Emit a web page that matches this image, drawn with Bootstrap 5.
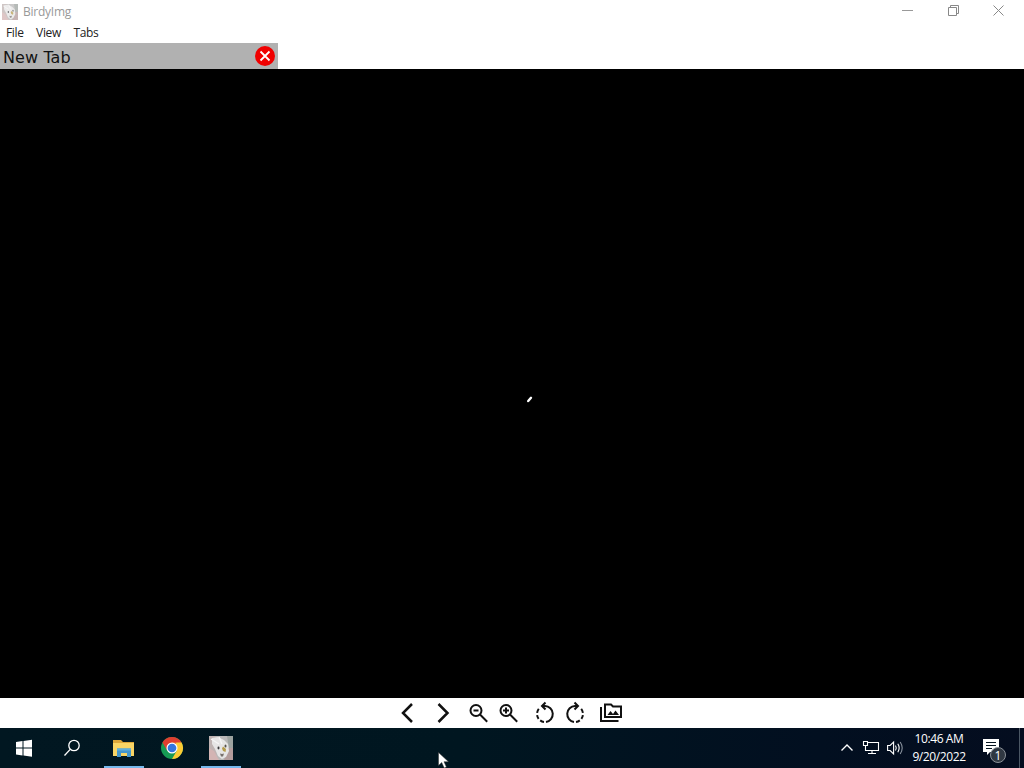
<!DOCTYPE html>
<html lang="en">
<head>
    <meta charset="UTF-8">
    <meta name="viewport" content="width=device-width, initial-scale=1.0">
    <title>BirdyImg</title>
    <link href="https://cdn.jsdelivr.net/npm/bootstrap@5.3.0/dist/css/bootstrap.min.css" rel="stylesheet">
    <style>
        body {
            height: 768px;
            font-family: "Open Sans", "Noto Sans", sans-serif;
            font-size: 12px;
            line-height: 18px;
            color: #222;
        }
        svg {
            display: block;
            flex: none;
            overflow: visible;
        }
        .title-bar {
            height: 23px;
            padding-left: 2px;
            color: #999;
        }
        .title-text {
            margin-left: 5px;
            padding-top: 1px;
            letter-spacing: -0.25px;
        }
        .window-btns {
            margin-right: 2.5px;
        }
        .window-btn {
            width: 45.5px;
            height: 21px;
        }
        .menu-bar {
            height: 20px;
            padding-left: 6px;
            gap: 12.5px;
            letter-spacing: -0.35px;
        }
        .tab-strip {
            height: 26px;
        }
        .image-tab {
            width: 278px;
            padding: 0 3px;
            background: #b1b1b1;
            font-family: "DejaVu Sans", sans-serif;
            font-size: 16px;
            letter-spacing: 0.1px;
            color: #111;
        }
        .viewer {
            height: 629px;
            background: #000;
            padding: 31px 0 0 36px;
        }
        .tool-bar {
            height: 30px;
            padding-left: 395px;
        }
        .task-bar {
            height: 40px;
            background: linear-gradient(90deg, #011721, #001620 45%, #020f20 80%, #040d1f);
            color: #fff;
        }
        .task-btn {
            width: 48px;
            height: 40px;
        }
        .task-open {
            width: 40px;
            margin: 0 5px;
            box-shadow: inset 0 -2px #76b9ed;
        }
        .tray {
            gap: 8px;
        }
        .clock {
            width: 62px;
            margin-left: -3px;
            letter-spacing: -0.4px;
            white-space: nowrap;
        }
        .notice-icon {
            margin-left: 5px;
            margin-right: 2px;
        }
        .show-desktop {
            width: 5px;
            height: 40px;
            border-left: 1px solid #4b5764;
        }
        .pointer {
            left: 438px;
            top: 752px;
        }
    </style>
</head>
<body class="d-flex flex-column overflow-hidden bg-white">
    <!-- Bird picture shared by the title bar and the task bar -->
    <svg class="d-none">
        <symbol id="bird" viewBox="0 0 24 24">
            <rect width="24" height="24" fill="#b9b8b8"/>
            <path d="M0 0h7L5 8l3 7-2 9H0z" fill="#bfb3b2"/>
            <path d="M0 12l5 3 5 9H0z" fill="#d3b4b3"/>
            <path d="M18 0h6v12h-4z" fill="#9da3a0"/>
            <path d="M19 12h5v12h-9z" fill="#b39c9c"/>
            <path d="M3 2l6-1 6 3 4 4 1 7-3 6-4 2-4-3-3-7-3-5z" fill="#e6e5e5"/>
            <path d="M2 3l8 5M10 1l3 7" stroke="#f5f5f5" stroke-width="1.300"/>
            <ellipse cx="9.500" cy="12" rx="1" ry="1.400" fill="#3a3a3c"/>
            <ellipse cx="16.500" cy="10" rx="1" ry="1.500" fill="#55524c"/>
            <path d="M14 10.500l3 2.500-.5 3-2.500-1-1-2.500z" fill="#b59b4a"/>
            <path d="M11 17.500l2 .5 2-.5-1 3h-2z" fill="#77716e"/>
        </symbol>
    </svg>

    <!-- Title Bar -->
    <div class="title-bar d-flex align-items-center">
        <svg width="16" height="16" opacity=".75"><use href="#bird"/></svg>
        <span class="title-text">BirdyImg</span>
        <div class="window-btns d-flex ms-auto align-self-start">
            <div class="window-btn d-flex align-items-center justify-content-center">
                <svg width="11" height="11" stroke="#999"><path d="M0 5.500h11"/></svg>
            </div>
            <div class="window-btn d-flex align-items-center justify-content-center">
                <svg width="11" height="11" fill="none" stroke="#888"><path d="M.5 2.500h8v8h-8zM2.500 2.500v-2h8v8h-2"/></svg>
            </div>
            <div class="window-btn d-flex align-items-center justify-content-center">
                <svg width="11" height="11" stroke="#888"><path d="M.5.500l10 10M10.500.500l-10 10"/></svg>
            </div>
        </div>
    </div>

    <!-- Menu -->
    <div class="menu-bar d-flex align-items-center">
        <span>File</span>
        <span>View</span>
        <span>Tabs</span>
    </div>

    <!-- Open Tabs -->
    <div class="tab-strip d-flex">
        <div class="image-tab d-flex align-items-center justify-content-between">
            <span class="pt-1">New Tab</span>
            <svg width="20" height="24" viewBox="0 0 20 24">
                <circle cx="10" cy="12" r="10" fill="#f00000"/>
                <path d="M5.500 7.500l9 9M14.500 7.500l-9 9" stroke="#fff" stroke-width="1.800"/>
            </svg>
        </div>
    </div>

    <!-- Viewer -->
    <div class="viewer d-flex align-items-center justify-content-center">
        <svg width="8" height="8"><path d="M2.200 6L5 2.800" stroke="#fff" stroke-width="2.400" stroke-linecap="round"/></svg>
    </div>

    <!-- Image Controls -->
    <div class="tool-bar d-flex align-items-center">
        <svg width="24" height="24" fill="none" stroke="#111" stroke-width="2.500"><path d="M17 3L8 12l9 9"/></svg>
        <svg class="ms-2" width="28" height="24" fill="none" stroke="#111" stroke-width="2.500"><path d="M11.500 3l9 9-9 9"/></svg>
        <svg width="30" height="24" viewBox="0 0 30 24" fill="none" stroke="#111" stroke-width="2">
            <g transform="translate(11.500 0)"><circle cx="9.500" cy="9.500" r="5.500"/><path d="M13.500 13.500l7.200 7.200M7 9.500h5"/></g>
        </svg>
        <svg width="30" height="24" viewBox="0 0 30 24" fill="none" stroke="#111" stroke-width="2">
            <g transform="translate(11.500 0)"><circle cx="9.500" cy="9.500" r="5.500"/><path d="M13.500 13.500l7.200 7.200M6.500 9.500h6M9.500 6.500v6"/></g>
        </svg>
        <svg width="36" height="24" viewBox="0 0 36 24" fill="none" stroke="#111" stroke-width="2">
            <g transform="translate(18 0)">
                <path d="M9 5h3a8 8 0 0 1 1 15.900"/>
                <path d="M12.500 1.500L9 5l3.500 3.500"/>
                <path d="M5.800 7.900A8 8 0 0 0 4.100 11.800M4.100 14.200A8 8 0 0 0 5.600 17.900M7.200 19.400A8 8 0 0 0 11 20.900"/>
            </g>
        </svg>
        <svg class="ms-1" width="30" height="24" viewBox="0 0 30 24" fill="none" stroke="#111" stroke-width="2">
            <g transform="translate(8 0)">
                <path d="M15 5h-3a8 8 0 0 0-1 15.900"/>
                <path d="M11.500 1.500L15 5l-3.500 3.500"/>
                <path d="M18.200 7.900A8 8 0 0 1 19.900 11.800M19.900 14.200A8 8 0 0 1 18.400 17.900M16.800 19.400A8 8 0 0 1 13 20.900"/>
            </g>
        </svg>
        <svg class="ms-3" width="30" height="24" viewBox="1 0 30 24" fill="none" stroke="#111" stroke-width="2">
            <path d="M5 3.500h6l2 2h8v10.500H5zM1 6v14h17.500"/>
            <path d="M7.500 14l3-4 2.500 3 2.500-3.500 3.500 4.500z" fill="#111" stroke="none"/>
        </svg>
    </div>

    <!-- Task Bar -->
    <div class="task-bar d-flex align-items-center">
        <div class="task-btn d-flex align-items-center justify-content-center">
            <svg width="16" height="18" viewBox="0 0 16 18" fill="#fff"><path d="M0 3l6.500-1v6.500H0zM7.500 1.900L16 .7v7.800H7.500zM0 9.500h6.500v7L0 15.500zM7.500 9.500H16v8.300l-8.500-1.200z"/></svg>
        </div>
        <div class="task-btn d-flex align-items-center justify-content-center">
            <svg width="18" height="18" fill="none" stroke="#fff" stroke-width="1.300"><circle cx="11" cy="6.500" r="5.200"/><path d="M7.200 10.400L1.500 16.500"/></svg>
        </div>
        <div class="task-btn task-open ms-2 me-1 d-flex align-items-center justify-content-center">
            <svg width="22" height="20" viewBox="0 0 22 20">
                <path d="M0 2h8l2 2h11v14H0z" fill="#dda73a"/>
                <path d="M0 5h21v13H0z" fill="#f9d565"/>
                <path d="M4 10.500h14V19h-4v-4H8v4H4z" fill="#4496cc"/>
                <path d="M4 10.500h14v2H4z" fill="#61b0dc"/>
            </svg>
        </div>
        <div class="task-btn d-flex align-items-center justify-content-center">
            <svg width="22" height="22" viewBox="0 0 48 48">
                <circle cx="24" cy="24" r="24" fill="#169b54"/>
                <path d="M24 24L3.200 12A24 24 0 0 1 44.800 12z" fill="#df3f30"/>
                <path d="M24 12h20.800A24 24 0 0 1 24 48l10.400-18z" fill="#fccb34"/>
                <path d="M3.200 12l10.400 18L24 24l10-12z" fill="#df3f30"/>
                <circle cx="24" cy="24" r="12" fill="#fff"/>
                <circle cx="24" cy="24" r="9.500" fill="#3476df"/>
            </svg>
        </div>
        <div class="task-btn task-open d-flex align-items-center justify-content-center">
            <svg width="24" height="24"><use href="#bird"/></svg>
        </div>

        <!-- Tray -->
        <div class="tray d-flex align-items-center ms-auto">
            <svg width="14" height="14" fill="none" stroke="#fff" stroke-width="1.400"><path d="M1.500 9.500L7 4l5.500 5.500"/></svg>
            <svg width="18" height="16" fill="none" stroke="#fff" stroke-width="1.100">
                <path d="M5 2.500h11.500v8H3.500V6M1.500 1.500h4v4h-4zM10 10.500v3M6 13.500h8"/>
            </svg>
            <svg width="15" height="16" viewBox="1 0 15 16" fill="none" stroke="#fff" stroke-width="1.100">
                <path d="M.6 5.500h2.500l3.500-3.500v12L3.100 10.500H.6z"/>
                <path d="M8.500 5.500q1.500 2.500 0 5M10.800 3.800q2.700 4.200 0 8.400"/>
                <path d="M13.200 2q4 6 0 12" stroke="#8a939e"/>
            </svg>
            <div class="clock text-center">
                <div>10:46 AM</div>
                <div>9/20/2022</div>
            </div>
            <svg class="notice-icon" width="26" height="28" viewBox="0 0 26 28">
                <path d="M0 5h16v13H7l-3 3v-3H0z" fill="#fff"/>
                <path d="M3 8.500h10M3 11.500h10M3 14.500h6" stroke="#061521"/>
                <circle cx="15" cy="21" r="7.500" fill="#303842" stroke="#8b9198"/>
                <text x="15" y="25.500" text-anchor="middle" font-size="12" fill="#fff">1</text>
            </svg>
            <div class="show-desktop"></div>
        </div>
    </div>

    <!-- Mouse pointer over the task bar -->
    <svg class="pointer position-absolute" width="13" height="16"><path d="M.5.500v13l3.200-3 2.500 5.500 2.200-1-2.400-5.300h4.500z" fill="#fff" stroke="#333" stroke-width=".5"/></svg>

    <script src="https://cdn.jsdelivr.net/npm/bootstrap@5.3.0/dist/js/bootstrap.bundle.min.js"></script>
</body>
</html>
